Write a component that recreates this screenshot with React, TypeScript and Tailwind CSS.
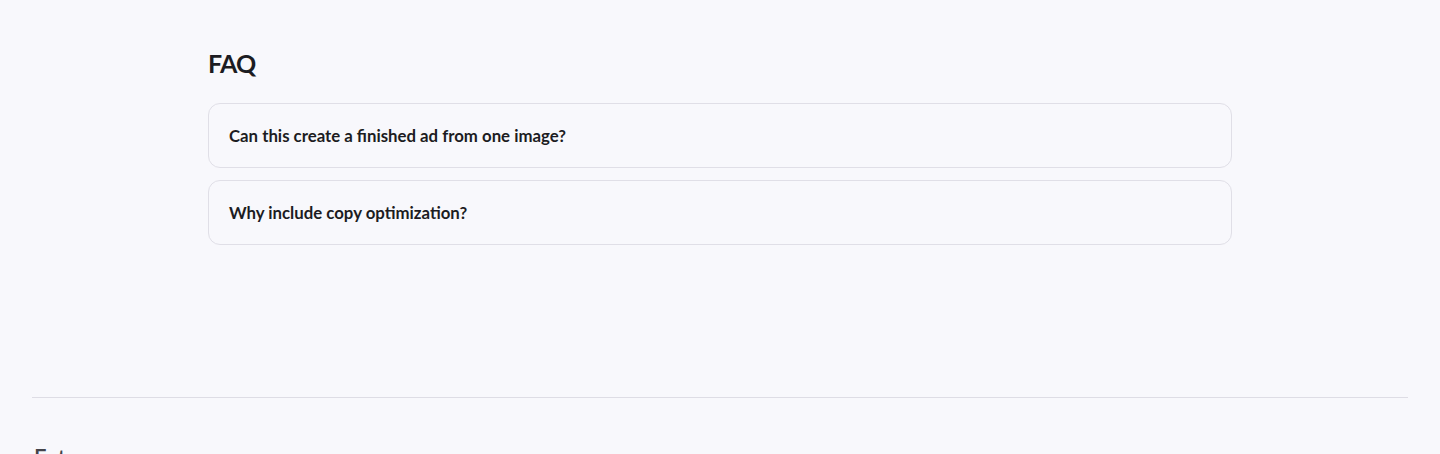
export default function App() {
  const faqs = [
    "Can this create a finished ad from one image?",
    "Why include copy optimization?",
  ];
  return (
    <div className="min-h-[454px] h-[454px] overflow-hidden bg-[#f8f8fc] font-['Lato',sans-serif] text-[#1c1c22]">
      <section className="mx-auto w-[1024px] pt-[43px]">
        <h2 className="text-[25px] font-bold leading-[40px] tracking-[-0.03em]">FAQ</h2>
        <div className="mt-[20px] flex flex-col gap-[12px]">
          {faqs.map((q) => (
            <div
              key={q}
              className="h-[65px] rounded-[12px] border border-[#e0dfe7] bg-[#f8f8fc] px-[20px] flex items-center"
            >
              <span className="text-[16.8px] font-bold leading-[24px]">{q}</span>
            </div>
          ))}
        </div>
      </section>
      <footer className="mx-[32px] mt-[152px] border-t border-[#deDde5]">
        <div className="flex pt-[43px] text-[#9a9aa3]">
          <div className="text-[22px] font-semibold text-[#44444a] ml-[2px]">Fotor</div>
          <div className="ml-[380px] mt-[9px] flex gap-[80px] text-[14px] font-semibold">
            <span>Products</span>
            <span>Features</span>
            <span>Resources</span>
            <span>Company</span>
            <span>Support</span>
          </div>
        </div>
      </footer>
    </div>
  );
}
